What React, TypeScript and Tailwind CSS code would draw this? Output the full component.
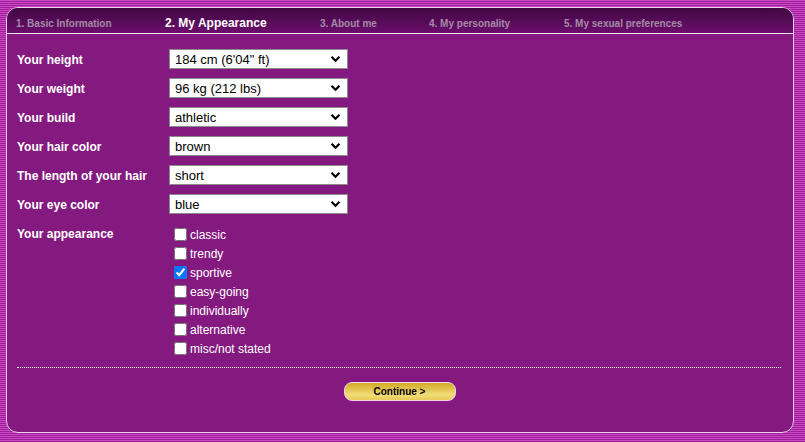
import React from "react";

const selects: { label: string; value: string }[] = [
  { label: "Your height", value: "184 cm (6'04\" ft)" },
  { label: "Your weight", value: "96 kg (212 lbs)" },
  { label: "Your build", value: "athletic" },
  { label: "Your hair color", value: "brown" },
  { label: "The length of your hair", value: "short" },
  { label: "Your eye color", value: "blue" },
];

const looks = [
  "classic",
  "trendy",
  "sportive",
  "easy-going",
  "individually",
  "alternative",
  "misc/not stated",
];

function Chevron() {
  return (
    <svg width="11" height="8" viewBox="0 0 11 8" className="shrink-0">
      <path d="M1.5 1.8 L5.5 5.8 L9.5 1.8" fill="none" stroke="#000" strokeWidth="2.2" />
    </svg>
  );
}

export default function App() {
  return (
    <div
      className="w-[805px] h-[442px] overflow-hidden pt-[7px] pl-[6px] bg-[repeating-linear-gradient(to_bottom,#cc45c4_0px,#cc45c4_1px,#9c229a_1px,#9c229a_2px)]"
      style={{ fontFamily: '"Liberation Sans", Arial, sans-serif' }}
    >
      <div className="w-[788px] h-[426px] rounded-[12px] border border-[#f2cdee] bg-[#841a80] overflow-hidden flex flex-col">
        {/* header */}
        <div className="h-[20px] pt-[5px] shrink-0 flex items-center pl-[9px] bg-[linear-gradient(to_bottom,#3f0841,#6c0e6d)] border-b border-[#f4e6f4] box-content">
          <span className="w-[149px] text-[10px] font-bold text-[#a58aa7]">1. Basic Information</span>
          <span className="w-[155px] text-[12px] font-bold text-white">2. My Appearance</span>
          <span className="w-[109px] text-[10px] font-bold text-[#a58aa7]">3. About me</span>
          <span className="w-[135px] text-[10px] font-bold text-[#a58aa7]">4. My personality</span>
          <span className="text-[10px] font-bold text-[#a58aa7]">5. My sexual preferences</span>
        </div>
        {/* body */}
        <div className="flex flex-col pt-[15px] pl-[10px] pr-[12px]">
          <div className="flex flex-col gap-[9px]">
            {selects.map((s) => (
              <div key={s.label} className="flex items-center h-[20px]">
                <span className="w-[152px] text-[12px] font-bold text-white pt-[2px]">{s.label}</span>
                <div className="w-[179px] h-[20px] bg-white border border-[#8a8a8a] flex items-center justify-between pl-[5px] pr-[6px]">
                  <span className="text-[13px] text-black leading-none">{s.value}</span>
                  <Chevron />
                </div>
              </div>
            ))}
          </div>
          <div className="flex mt-[11px]">
            <span className="w-[152px] text-[12px] font-bold text-white pt-[2px] leading-[15px]">Your appearance</span>
            <div className="flex flex-col pl-[5px]">
              {looks.map((l) => (
                <label key={l} className="flex items-center h-[19px]">
                  <input
                    type="checkbox"
                    defaultChecked={l === "sportive"}
                    className="w-[13px] h-[13px] m-0 mr-[3px] accent-[#0075ff]"
                  />
                  <span className="text-[12px] text-white pt-[1px]">{l}</span>
                </label>
              ))}
            </div>
          </div>
          <div className="mt-[9px] border-t border-dotted border-white" />
          <div className="flex justify-center mt-[14px] pl-[1px]">
            <button className="w-[112px] h-[19px] rounded-[8px] border border-[#f6d6ec] bg-[linear-gradient(to_bottom,#d2aa26,#f2dc78_70%,#e8c956)] text-[10px] font-bold text-black leading-none">
              Continue &gt;
            </button>
          </div>
        </div>
      </div>
    </div>
  );
}
